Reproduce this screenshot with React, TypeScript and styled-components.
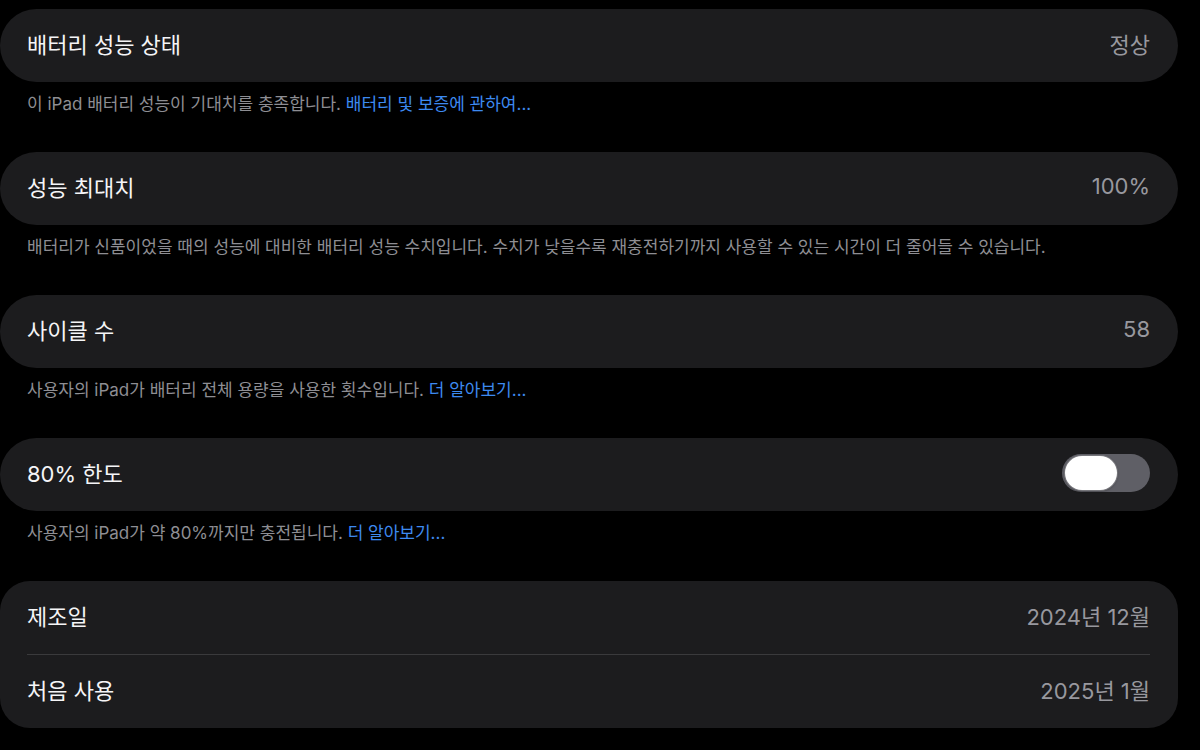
import React from "react";
import styled, { createGlobalStyle } from "styled-components";

const Global = createGlobalStyle`
  html, body { margin: 0; padding: 0; background: #000; }
  body {
    font-family: "Inter", "Noto Sans CJK KR", "Noto Sans", sans-serif;
    font-weight: 400;
    -webkit-font-smoothing: antialiased;
  }
`;

const Page = styled.div`
  width: 1200px;
  height: 750px;
  box-sizing: border-box;
  padding: 9px 22px 0 0;
  background: #000;
  display: flex;
  flex-direction: column;
  overflow: hidden;
`;

const Card = styled.div<{ $radius?: number }>`
  background: #1c1c1e;
  border-radius: ${(p) => p.$radius ?? 37}px;
  display: flex;
  flex-direction: column;
  padding: 0 28px 0 27px;
`;

const Row = styled.div`
  height: 73px;
  box-sizing: border-box;
  padding-bottom: 5px;
  display: flex;
  align-items: center;
  justify-content: space-between;
`;

const Divider = styled.div`
  height: 1px;
  background: #3a3a3c;
`;

const Title = styled.span`
  color: #f5f5f7;
  font-size: 22px;
`;

const Value = styled.span`
  color: #98989e;
  font-size: 22px;
`;

const Footer = styled.div`
  height: 70px;
  box-sizing: border-box;
  padding: 11px 27px 0;
  color: #8e8e93;
  font-size: 17px;
  line-height: 22px;
  white-space: nowrap;
`;

const Link = styled.span`
  color: #3d8af0;
`;

const Track = styled.div`
  width: 88px;
  height: 38px;
  border-radius: 19px;
  background: #5f5f66;
  display: flex;
  align-items: center;
  padding-left: 3px;
  box-sizing: border-box;
  margin-top: 2px;
`;

const Knob = styled.div`
  width: 52px;
  height: 34px;
  border-radius: 17px;
  background: #fff;
  box-shadow: 0 0 0 1px #77777c, 0 1px 3px rgba(0, 0, 0, 0.4);
`;

export default function App() {
  return (
    <>
      <Global />
      <Page>
        <Card>
          <Row>
            <Title>배터리 성능 상태</Title>
            <Value>정상</Value>
          </Row>
        </Card>
        <Footer>
          이 iPad 배터리 성능이 기대치를 충족합니다. <Link>배터리 및 보증에 관하여...</Link>
        </Footer>

        <Card>
          <Row>
            <Title>성능 최대치</Title>
            <Value>100%</Value>
          </Row>
        </Card>
        <Footer>
          배터리가 신품이었을 때의 성능에 대비한 배터리 성능 수치입니다. 수치가 낮을수록 재충전하기까지 사용할 수 있는 시간이 더 줄어들 수 있습니다.
        </Footer>

        <Card>
          <Row>
            <Title>사이클 수</Title>
            <Value>58</Value>
          </Row>
        </Card>
        <Footer>
          사용자의 iPad가 배터리 전체 용량을 사용한 횟수입니다. <Link>더 알아보기...</Link>
        </Footer>

        <Card>
          <Row>
            <Title>80% 한도</Title>
            <Track>
              <Knob />
            </Track>
          </Row>
        </Card>
        <Footer>
          사용자의 iPad가 약 80%까지만 충전됩니다. <Link>더 알아보기...</Link>
        </Footer>

        <Card $radius={30}>
          <Row>
            <Title>제조일</Title>
            <Value>2024년 12월</Value>
          </Row>
          <Divider />
          <Row>
            <Title>처음 사용</Title>
            <Value>2025년 1월</Value>
          </Row>
        </Card>
      </Page>
    </>
  );
}
